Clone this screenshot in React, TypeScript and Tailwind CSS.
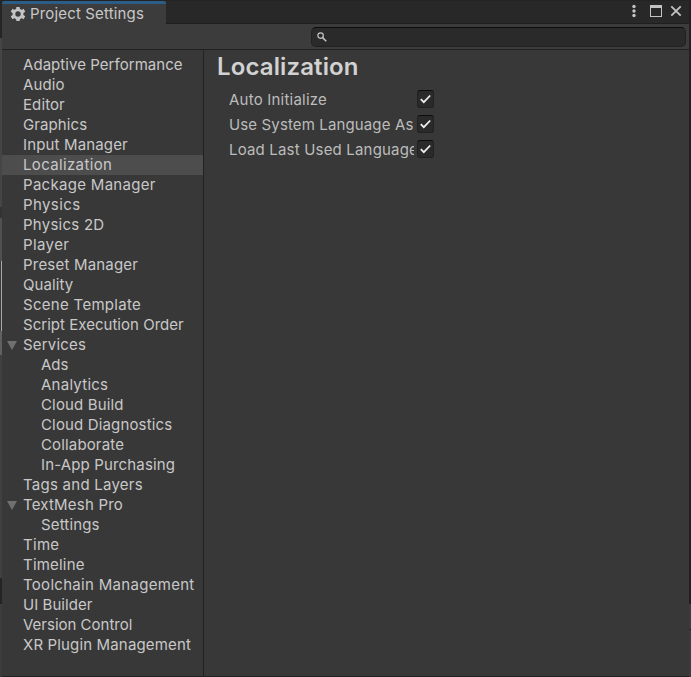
import React from "react";

type Item = { label: string; child?: boolean; open?: boolean; selected?: boolean; tracking?: string };

const items: Item[] = [
  { label: "Adaptive Performance", tracking: "tracking-[0.05px]" },
  { label: "Audio", tracking: "tracking-[0.1px]" },
  { label: "Editor", tracking: "tracking-[0.1px]" },
  { label: "Graphics", tracking: "tracking-[0.1px]" },
  { label: "Input Manager", tracking: "tracking-[0.15px]" },
  { label: "Localization", selected: true, tracking: "tracking-[0.35px]" },
  { label: "Package Manager" },
  { label: "Physics", tracking: "tracking-[0.4px]" },
  { label: "Physics 2D", tracking: "tracking-[0.25px]" },
  { label: "Player", tracking: "tracking-[0.4px]" },
  { label: "Preset Manager", tracking: "tracking-[0.2px]" },
  { label: "Quality", tracking: "tracking-[0.1px]" },
  { label: "Scene Template" },
  { label: "Script Execution Order", tracking: "tracking-[0.03px]" },
  { label: "Services", open: true, tracking: "tracking-[0.2px]" },
  { label: "Ads", child: true, tracking: "tracking-[0px]" },
  { label: "Analytics", child: true, tracking: "tracking-[0.25px]" },
  { label: "Cloud Build", child: true, tracking: "tracking-[0.15px]" },
  { label: "Cloud Diagnostics", child: true, tracking: "tracking-[0.15px]" },
  { label: "Collaborate", child: true, tracking: "tracking-[0.15px]" },
  { label: "In-App Purchasing", child: true, tracking: "tracking-[0.15px]" },
  { label: "Tags and Layers", tracking: "tracking-[0.25px]" },
  { label: "TextMesh Pro", open: true, tracking: "tracking-[0.2px]" },
  { label: "Settings", child: true, tracking: "tracking-[0.15px]" },
  { label: "Time" },
  { label: "Timeline", tracking: "tracking-[0.2px]" },
  { label: "Toolchain Management" },
  { label: "UI Builder", tracking: "tracking-[0.05px]" },
  { label: "Version Control", tracking: "tracking-[0px]" },
  { label: "XR Plugin Management", tracking: "tracking-[0.15px]" },
];

const options = [
  { label: "Auto Initialize", tracking: "tracking-[0.22px]" },
  { label: "Use System Language As", tracking: "tracking-[0.13px]" },
  { label: "Load Last Used Language", tracking: "tracking-[0.18px]" },
];

function GearIcon() {
  return (
    <svg width="16" height="16" viewBox="0 0 16 16" className="shrink-0">
      <g fill="#c4c4c4">
        <rect x="6.2" y="1" width="3.6" height="14" rx="0.4" />
        <rect x="6.2" y="0.6" width="3.6" height="14.8" rx="0.4" transform="rotate(60 8 8)" />
        <rect x="6.2" y="0.6" width="3.6" height="14.8" rx="0.4" transform="rotate(120 8 8)" />
        <circle cx="8" cy="8" r="5.5" />
      </g>
      <circle cx="8" cy="8" r="2.7" fill="#3c3c3c" />
    </svg>
  );
}

function TitleBar() {
  return (
    <div className="flex h-[23px] justify-between">
      <div className="flex h-[23px] w-[164px] items-center rounded-t-[2px] border-t-[3px] border-[#2c5d87] bg-[#3c3c3c] pl-2">
        <GearIcon />
        <span className="ml-1 text-[15px] leading-5 tracking-[0.16px] whitespace-nowrap text-[#c8c8c8]">Project Settings</span>
      </div>
      <div className="h-[23px] grow border-b border-[#1f1f1f]">
        <svg width="523" height="22" viewBox="166 0 523 22" className="block">
          <g fill="#c4c4c4">
            <circle cx="634" cy="5.5" r="1.7" />
            <circle cx="634" cy="10" r="1.7" />
            <circle cx="634" cy="14.5" r="1.7" />
            <path fillRule="evenodd" d="M650 4h12v12h-12zM651 7v8h10V7z" />
          </g>
          <path d="M671.3 5.3l9.4 9.4M680.7 5.3l-9.4 9.4" stroke="#c4c4c4" strokeWidth="1.8" />
        </svg>
      </div>
    </div>
  );
}

function Checkbox() {
  return (
    <span className="flex h-[18px] w-[17px] shrink-0 items-center justify-center rounded-[3px] border border-[#212121] border-t-[#0d0d0d] bg-[#2a2a2a]">
      <svg width="15" height="16" viewBox="0 0 15 16" className="shrink-0">
        <path d="M2.8 8.2l3 3L12.2 4.5" fill="none" stroke="#f0f0f0" strokeWidth="1.7" />
      </svg>
    </span>
  );
}

export default function App() {
  return (
    <div className="flex h-[677px] w-[691px] overflow-hidden bg-[#282828] font-['Inter','Liberation_Sans',sans-serif]">
      <div className="flex w-[2px] shrink-0 flex-col">
        <div className="h-[38px] bg-[#252525]" />
        <div className="h-[169px] bg-[#454545]" />
        <div className="h-[11px] bg-[#333333]" />
        <div className="h-[43px] bg-[#505050]" />
        <div className="h-[70px] border-r border-[#aaaaaa] bg-[#3a3a3a]" />
        <div className="h-[24px] bg-[#606060]" />
        <div className="h-[223px] bg-[#404040]" />
        <div className="h-[26px] bg-[#242424]" />
        <div className="grow bg-[#3c3c3c]" />
      </div>

      <div className="flex w-[687px] flex-col border-t border-[#232323]">
        <TitleBar />
        <div className="flex h-[25px] shrink-0 items-start justify-end bg-[#3c3c3c] pt-[3px] pr-[3px]">
          <div className="flex h-5 w-[375px] items-center rounded-[5px] border border-[#212121] border-t-[#0d0d0d] bg-[#2a2a2a] pl-[5px]">
            <svg width="10" height="10" viewBox="0 0 10 10" fill="none" stroke="#c4c4c4">
              <circle cx="3.6" cy="3.6" r="2.7" strokeWidth="1.2" />
              <path d="M5.6 5.6l3.6 3.6" strokeWidth="1.6" />
            </svg>
          </div>
        </div>

        <div className="flex min-h-0 grow border-y border-[#222222] bg-[#383838]">
          <nav className="w-[202px] shrink-0 border-r border-[#222222] pt-[5px]">
            {items.map((it) => (
              <div
                key={it.label}
                className={`flex h-5 items-center text-[15px] leading-5 whitespace-nowrap text-[#c8c8c8] ${it.tracking ?? "tracking-[0.3px]"} ${it.selected ? "bg-[#4d4d4d]" : ""} ${it.child ? "pl-[39px]" : it.open ? "pl-[5px]" : "pl-[21px]"}`}
              >
                {it.open && (
                  <svg width="10" height="9" viewBox="0 0 10 9" className="mr-[6px] shrink-0">
                    <path d="M0 0h10L5 9z" fill="#707070" />
                  </svg>
                )}
                <span>{it.label}</span>
              </div>
            ))}
          </nav>
          <main className="grow pl-[13px]">
            <h1 className="h-9 text-[24px] leading-[33px] font-semibold tracking-[0.12px] text-[#d2d2d2]">Localization</h1>
            <div className="flex flex-col">
              {options.map((o) => (
                <div key={o.label} className="flex h-[25px] items-center pl-3">
                  <span
                    className={`mr-[3px] w-[185px] shrink-0 overflow-hidden pt-[2px] text-[15px] leading-5 whitespace-nowrap text-[#bcbcbc] ${o.tracking}`}
                  >
                    {o.label}
                  </span>
                  <Checkbox />
                </div>
              ))}
            </div>
          </main>
        </div>
      </div>

      <div className="flex w-[2px] shrink-0 flex-col">
        <div className="h-[604px] bg-[#202020]" />
        <div className="h-[25px] bg-[#3c3c3c]" />
        <div className="h-px bg-[#222222]" />
        <div className="grow bg-[#3c3c3c]" />
      </div>
    </div>
  );
}
